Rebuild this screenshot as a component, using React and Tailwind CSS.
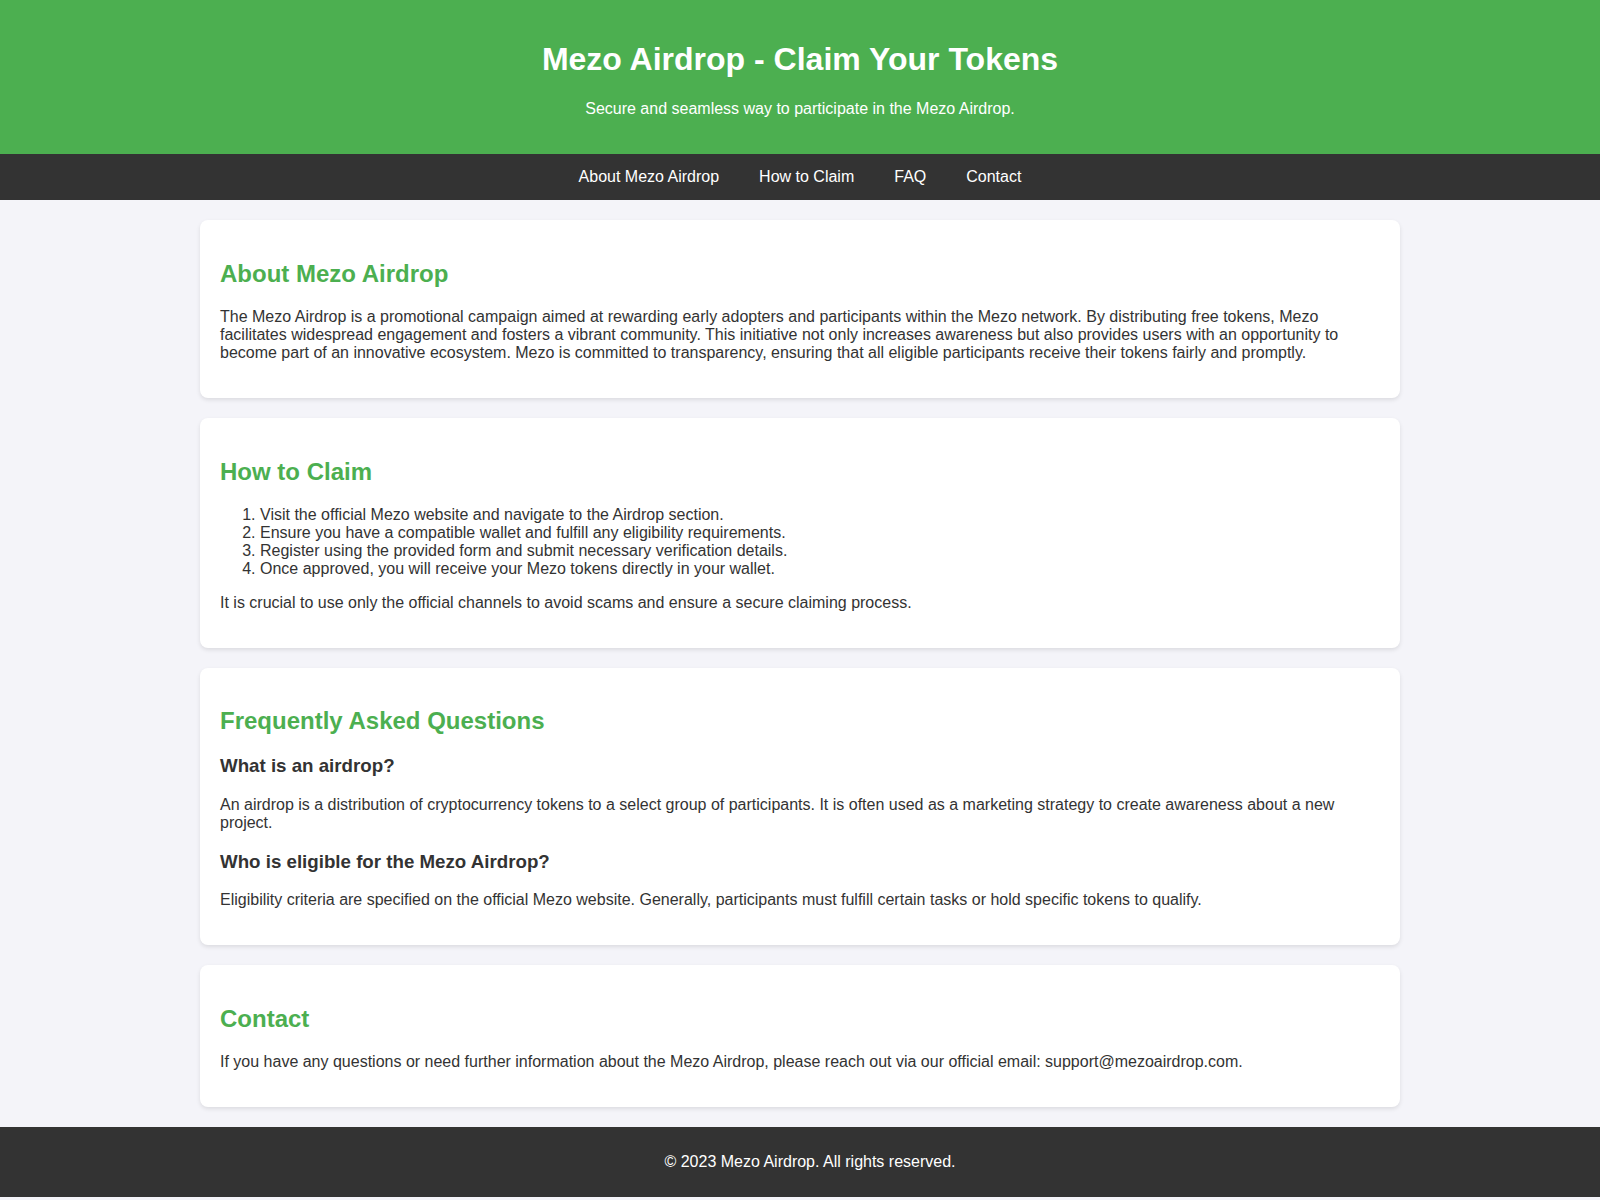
import React from 'react'

const Card = ({ title, children }) => (
    <section className="bg-white rounded-lg p-5 shadow-[0_2px_4px_rgba(0,0,0,0.1)]">
        <h2 className="text-[24px] font-bold text-[#4CAF50] my-[19.92px]">{title}</h2>
        {children}
    </section>
)

const App = () => {
    const steps = [
        'Visit the official Mezo website and navigate to the Airdrop section.',
        'Ensure you have a compatible wallet and fulfill any eligibility requirements.',
        'Register using the provided form and submit necessary verification details.',
        'Once approved, you will receive your Mezo tokens directly in your wallet.'
    ]

    return (
        <div className="min-h-screen bg-[#f4f4f9] text-[#333] text-base leading-[normal] font-['Liberation_Sans',Arial,sans-serif]">
            <header className="bg-[#4CAF50] text-white text-center py-5">
                <h1 className="text-[32px] font-bold my-[21.44px]">Mezo Airdrop - Claim Your Tokens</h1>
                <p className="my-4">Secure and seamless way to participate in the Mezo Airdrop.</p>
            </header>

            <nav className="bg-[#333] text-center py-[14px]">
                <a href="#about" className="text-white mx-5">About Mezo Airdrop</a>
                <a href="#claim" className="text-white mx-5">How to Claim</a>
                <a href="#faq" className="text-white mx-5">FAQ</a>
                <a href="#contact" className="text-white mx-5">Contact</a>
            </nav>

            <main className="max-w-[1200px] mx-auto py-5 flex flex-col gap-5">
                <Card title="About Mezo Airdrop">
                    <p className="my-4">
                        The Mezo Airdrop is a promotional campaign aimed at rewarding early adopters and participants within the Mezo network. By distributing free tokens, Mezo facilitates widespread engagement and fosters a vibrant community. This initiative not only increases awareness but also provides users with an opportunity to become part of an innovative ecosystem. Mezo is committed to transparency, ensuring that all eligible participants receive their tokens fairly and promptly.
                    </p>
                </Card>

                <Card title="How to Claim">
                    <ol className="list-decimal pl-10 my-4">
                        {steps.map((s, i) => (
                            <li key={i}>{s}</li>
                        ))}
                    </ol>
                    <p className="my-4">It is crucial to use only the official channels to avoid scams and ensure a secure claiming process.</p>
                </Card>

                <Card title="Frequently Asked Questions">
                    <h3 className="text-[18.72px] font-bold my-[18.72px]">What is an airdrop?</h3>
                    <p className="my-4">An airdrop is a distribution of cryptocurrency tokens to a select group of participants. It is often used as a marketing strategy to create awareness about a new project.</p>
                    <h3 className="text-[18.72px] font-bold my-[18.72px]">Who is eligible for the Mezo Airdrop?</h3>
                    <p className="my-4">Eligibility criteria are specified on the official Mezo website. Generally, participants must fulfill certain tasks or hold specific tokens to qualify.</p>
                </Card>

                <Card title="Contact">
                    <p className="my-4">If you have any questions or need further information about the Mezo Airdrop, please reach out via our official email: support@mezoairdrop.com.</p>
                </Card>
            </main>

            <footer className="bg-[#333] text-white text-center py-[10px] pl-5">
                <p className="my-4">&copy; 2023 Mezo Airdrop. All rights reserved.</p>
            </footer>
        </div>
    )
}

export default App
